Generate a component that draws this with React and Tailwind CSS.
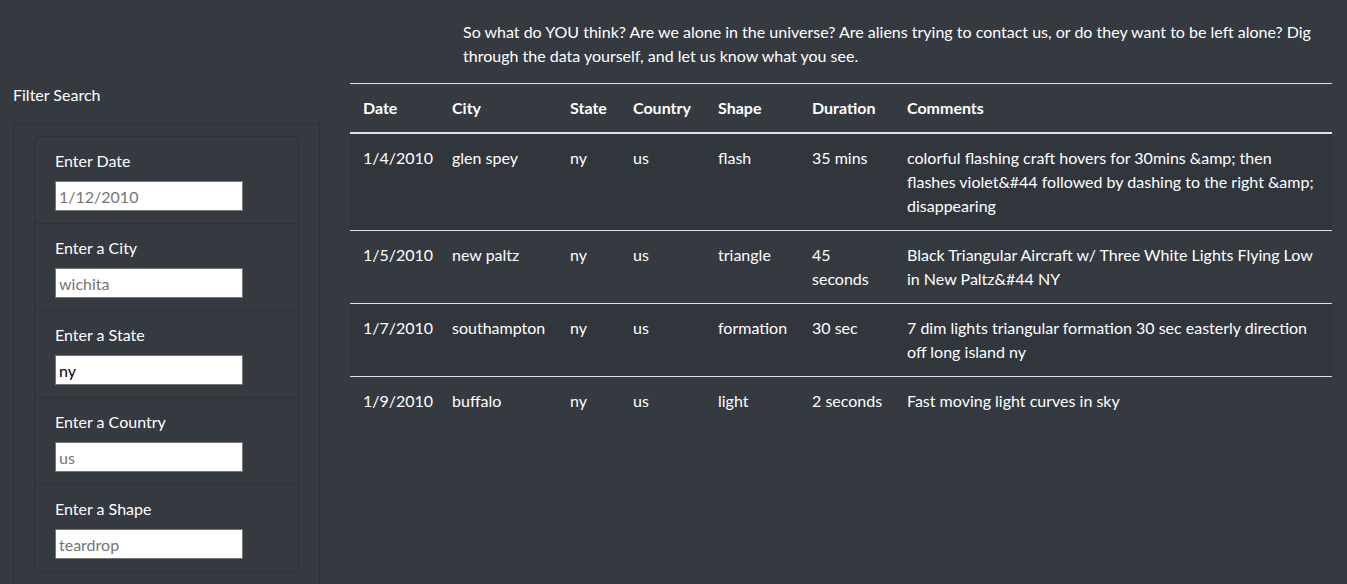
import React from "react";

const rows = [
  {
    date: "1/4/2010",
    city: "glen spey",
    state: "ny",
    country: "us",
    shape: "flash",
    duration: "35 mins",
    comments:
      "colorful flashing craft hovers for 30mins &amp; then flashes violet&#44 followed by dashing to the right &amp; disappearing",
  },
  {
    date: "1/5/2010",
    city: "new paltz",
    state: "ny",
    country: "us",
    shape: "triangle",
    duration: "45 seconds",
    comments:
      "Black Triangular Aircraft w/ Three White Lights Flying Low in New Paltz&#44 NY",
  },
  {
    date: "1/7/2010",
    city: "southampton",
    state: "ny",
    country: "us",
    shape: "formation",
    duration: "30 sec",
    comments:
      "7 dim lights triangular formation 30 sec easterly direction off long island ny",
  },
  {
    date: "1/9/2010",
    city: "buffalo",
    state: "ny",
    country: "us",
    shape: "light",
    duration: "2 seconds",
    comments: "Fast moving light curves in sky",
  },
];

const filters = [
  { label: "Enter Date", placeholder: "1/12/2010" },
  { label: "Enter a City", placeholder: "wichita" },
  { label: "Enter a State", value: "ny" },
  { label: "Enter a Country", placeholder: "us" },
  { label: "Enter a Shape", placeholder: "teardrop" },
];

const cell = "pt-3 pb-3 pl-[13px] pr-[11px] align-top";

export default function App() {
  return (
    <div
      className="min-h-[584px] w-full bg-[#343a40] text-white text-[16px] leading-6 overflow-hidden"
      style={{ fontFamily: "Lato, 'Noto Sans', sans-serif" }}
    >
      <div className="flex">
        {/* Left column */}
        <div className="w-[350px] shrink-0 pl-[13px] pr-[30px] pt-[83px]">
          <div className="h-6">Filter Search</div>
          <div className="mt-4 border border-[#2c3137] pl-5 pr-5 pt-[12px] pb-[20px]">
            <div className="border border-[#2c3137] rounded-[4px]">
              {filters.map((f, i) => (
                <div
                  key={f.label}
                  className={
                    "px-5 pt-3 pb-3 " +
                    (i > 0 ? "border-t border-[#2c3137]" : "")
                  }
                >
                  <div className="mb-2 h-6">{f.label}</div>
                  <input
                    type="text"
                    readOnly
                    defaultValue={f.value}
                    placeholder={f.placeholder}
                    className="block w-[188px] h-[30px] bg-white border border-[#767676] px-[3px] text-[16px] text-black placeholder:text-[#757575] outline-none"
                  />
                </div>
              ))}
            </div>
          </div>
        </div>

        {/* Right column */}
        <div className="flex-1 pr-[15px] pt-5">
          <p className="pl-[113px] mb-[15px]">
            So what do YOU think? Are we alone in the universe? Are aliens trying
            to contact us, or do they want to be left alone? Dig through the data
            yourself, and let us know what you see.
          </p>
          <table className="w-[982px] table-fixed border-collapse">
            <colgroup>
              <col className="w-[89px]" />
              <col className="w-[118px]" />
              <col className="w-[63px]" />
              <col className="w-[85px]" />
              <col className="w-[94px]" />
              <col className="w-[95px]" />
              <col />
            </colgroup>
            <thead>
              <tr className="border-t border-[#dee2e6] border-b-2 border-b-[#dee2e6]">
                {["Date", "City", "State", "Country", "Shape", "Duration", "Comments"].map(
                  (h) => (
                    <th key={h} className="pt-3 pb-3 pl-[13px] pr-[11px] text-left font-bold align-bottom">
                      {h}
                    </th>
                  )
                )}
              </tr>
            </thead>
            <tbody>
              {rows.map((r, i) => (
                <tr
                  key={r.date}
                  className={
                    (i > 0 ? "border-t border-[#dee2e6] " : "") +
                    (i % 2 === 0 ? "bg-[#31363c]" : "")
                  }
                >
                  <td className={cell}>{r.date}</td>
                  <td className={cell}>{r.city}</td>
                  <td className={cell}>{r.state}</td>
                  <td className={cell}>{r.country}</td>
                  <td className={cell}>{r.shape}</td>
                  <td className={cell}>{r.duration}</td>
                  <td className={cell}>{r.comments}</td>
                </tr>
              ))}
            </tbody>
          </table>
        </div>
      </div>
    </div>
  );
}
